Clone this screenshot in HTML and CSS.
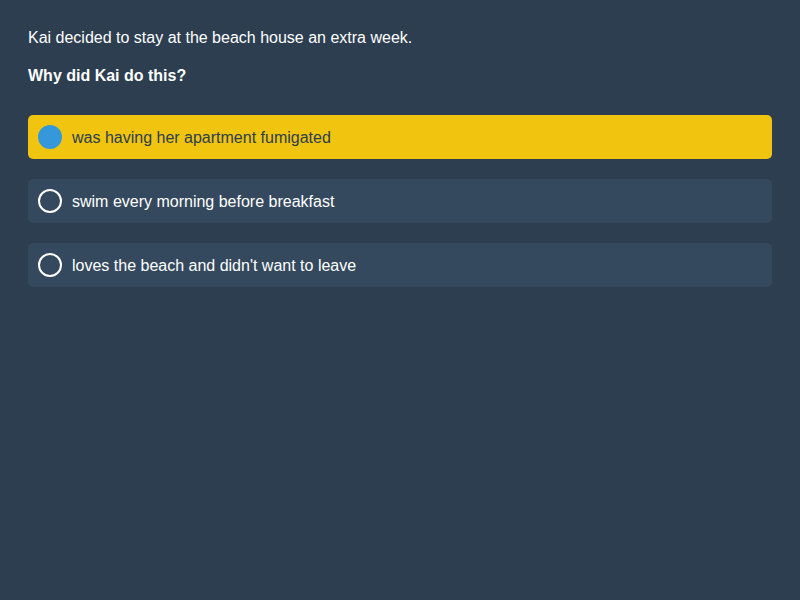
FILE: index.html
```html
<!DOCTYPE html>
<html lang="en">
<head>
<meta charset="utf-8">
<meta name="viewport" content="width=device-width, initial-scale=1">
<title>Why did Kai do this?</title>
<link rel="stylesheet" href="styles.css">
</head>
<body>
<main class="quiz">
  <p class="context">Kai decided to stay at the beach house an extra week.</p>
  <form>
    <fieldset class="question">
      <legend class="prompt">Why did Kai do this?</legend>
      <label class="option" for="reason-1">
        <input class="radio" type="radio" name="reason" id="reason-1" checked>
        <span>was having her apartment fumigated</span>
      </label>
      <label class="option" for="reason-2">
        <input class="radio" type="radio" name="reason" id="reason-2">
        <span>swim every morning before breakfast</span>
      </label>
      <label class="option" for="reason-3">
        <input class="radio" type="radio" name="reason" id="reason-3">
        <span>loves the beach and didn't want to leave</span>
      </label>
    </fieldset>
  </form>
</main>
</body>
</html>
```
FILE: styles.css
```css
* {
  box-sizing: border-box;
}

body {
  margin: 8px;
  background: #2c3e50;
  color: #fff;
  font: 16px/19px "Liberation Sans", Arial, sans-serif;
}

.quiz {
  padding: 20px;
}

.context {
  margin: 0 0 19px;
}

.question {
  min-width: 0;
  margin: 0;
  padding: 0;
  border: 0;
}

.prompt {
  margin-bottom: 30px;
  padding: 0;
  font-weight: bold;
}

.option {
  display: flex;
  align-items: center;
  gap: 10px;
  margin-bottom: 20px;
  padding: 10px;
  border-radius: 5px;
  background: #34495e;
  cursor: pointer;
}

.option:has(.radio:checked) {
  background: #f1c40f;
  color: #2c3e50;
}

.radio {
  flex: none;
  width: 24px;
  height: 24px;
  margin: 0;
  border: 2px solid #fff;
  border-radius: 50%;
  appearance: none;
}

.radio:checked {
  border-color: #3498db;
  background: #3498db;
}
```
